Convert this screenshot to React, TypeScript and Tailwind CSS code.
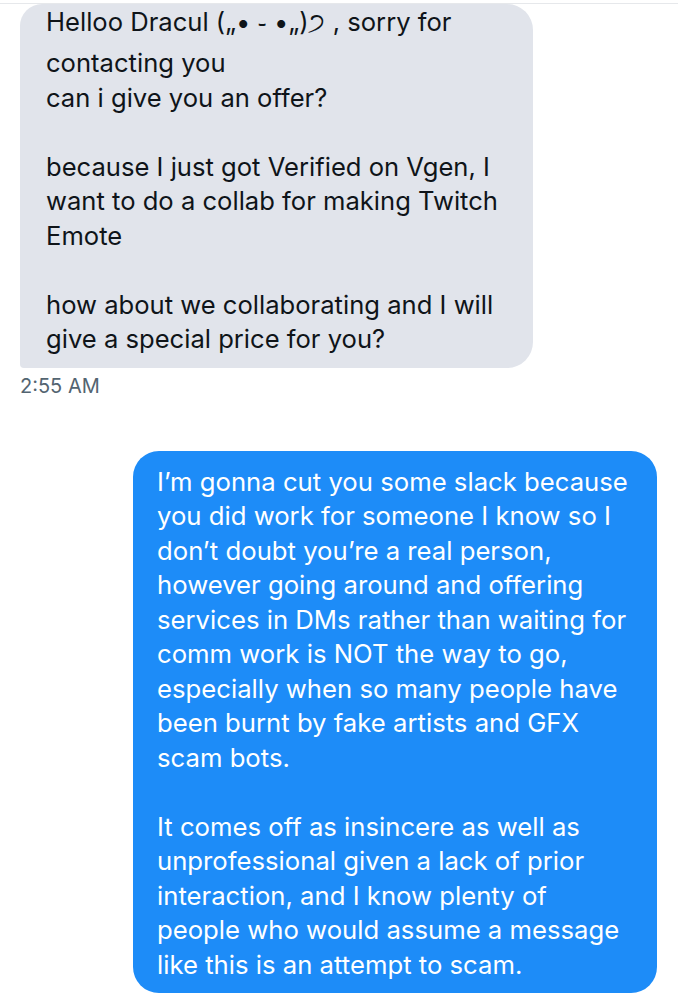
export default function App() {
  const font = { fontFamily: 'Inter, "Noto Sans", "DejaVu Sans", sans-serif' };
  return (
    <div className="w-[678px] h-[1000px] bg-white overflow-hidden" style={font}>
      <div className="h-[3px]" />
      <div className="h-px bg-[#e6e8eb]" />
      <div className="pl-[20px]">
        <div className="w-[513px] bg-[#e1e4eb] rounded-tl-[22px] rounded-tr-[26px] rounded-br-[26px] rounded-bl-[4px] pl-[26px] pr-4 pt-[2px] pb-[11px] text-[25.6px] leading-[34.5px] text-[#0f1419] whitespace-nowrap">
          <div className="leading-[32px] mb-[8px]">Helloo Dracul („• ֊ •„)੭ , sorry for</div>
          <div>contacting you</div>
          <div>can i give you an offer?</div>
          <div className="h-[34.5px]" />
          <div>because I just got Verified on Vgen, I</div>
          <div>want to do a collab for making Twitch</div>
          <div>Emote</div>
          <div className="h-[34.5px]" />
          <div>how about we collaborating and I will</div>
          <div>give a special price for you?</div>
        </div>
        <div className="mt-[6px] text-[20px] leading-[24px] text-[#536471]">2:55 AM</div>
      </div>
      <div className="flex justify-end pr-[21px] mt-[53px]">
        <div className="w-[524px] bg-[#1d8cf8] rounded-[26px] pl-[24px] pr-3 pt-[14px] pb-[11px] text-[25.7px] leading-[34.5px] text-white whitespace-nowrap">
          <div>I’m gonna cut you some slack because</div>
          <div>you did work for someone I know so I</div>
          <div>don’t doubt you’re a real person,</div>
          <div>however going around and offering</div>
          <div>services in DMs rather than waiting for</div>
          <div>comm work is NOT the way to go,</div>
          <div>especially when so many people have</div>
          <div>been burnt by fake artists and GFX</div>
          <div>scam bots.</div>
          <div className="h-[34.5px]" />
          <div>It comes off as insincere as well as</div>
          <div>unprofessional given a lack of prior</div>
          <div>interaction, and I know plenty of</div>
          <div>people who would assume a message</div>
          <div>like this is an attempt to scam.</div>
        </div>
      </div>
    </div>
  );
}
